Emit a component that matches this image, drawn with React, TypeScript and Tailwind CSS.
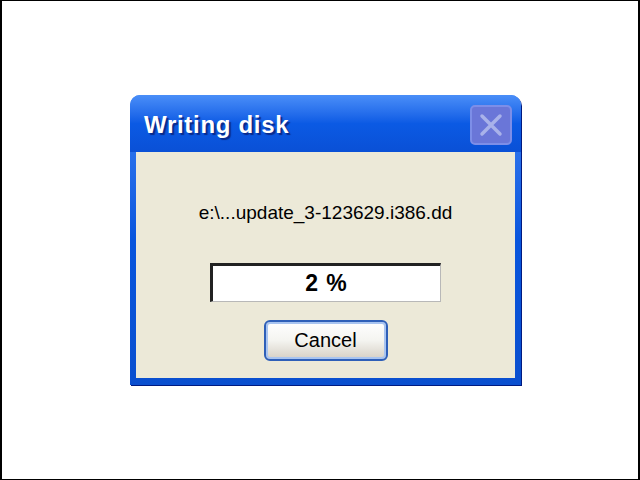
export default function App() {
  return (
    <div className="flex h-[480px] w-[640px] items-start justify-start border-t border-b border-l-2 border-r-2 border-black bg-white pl-[128px] font-['Liberation_Sans',sans-serif]">
      <div className="mt-[94px] flex w-[391px] flex-col overflow-hidden rounded-t-[10px] bg-gradient-to-b from-[#3a80f3] via-[#0855dd] to-[#0a4fcf] shadow-[1px_1px_0_#001a80]">
        {/* title bar */}
        <div className="flex h-[57px] items-center justify-between bg-gradient-to-b from-[#4a8ef8] via-[#0b5ae4] to-[#0a50d6] pl-[14px] pr-[9px] pt-[2px]">
          <span className="text-[24px] font-bold tracking-[0.7px] text-white [text-shadow:2px_2px_1px_#0a2a8a]">Writing disk</span>
          <div className="flex h-[40px] w-[42px] items-center justify-center rounded-[5px] border-2 border-[#7d8ee8] bg-[#6a76d8]">
            <svg width="26" height="26" viewBox="0 0 26 26">
              <path d="M4 4L22 22M22 4L4 22" stroke="#a9b2ea" strokeWidth="3.5" strokeLinecap="round" />
            </svg>
          </div>
        </div>
        {/* body */}
        <div className="mx-[6px] mb-[7px] flex flex-col items-center bg-[#ece9d8] pb-[17px] pt-[47px]">
          <div className="text-[19px] text-black">e:\...update_3-123629.i386.dd</div>
          <div className="mt-[35px] flex h-[39px] w-[231px] items-center justify-center border-t-[3px] border-l-[3px] border-b border-r border-t-[#222] border-l-[#222] border-b-[#b8b8b8] border-r-[#b8b8b8] bg-white">
            <span className="text-[23px] font-bold tracking-[1px] text-black">2 %</span>
          </div>
          <button className="mt-[18px] flex h-[41px] w-[124px] items-center justify-center rounded-[6px] border-2 border-[#2e5fb8] bg-gradient-to-b from-[#ffffff] via-[#f4f4f0] to-[#d6d0c5] text-[20px] text-black shadow-[inset_0_0_0_2px_#a8c4f0]">
            Cancel
          </button>
        </div>
      </div>
    </div>
  );
}
